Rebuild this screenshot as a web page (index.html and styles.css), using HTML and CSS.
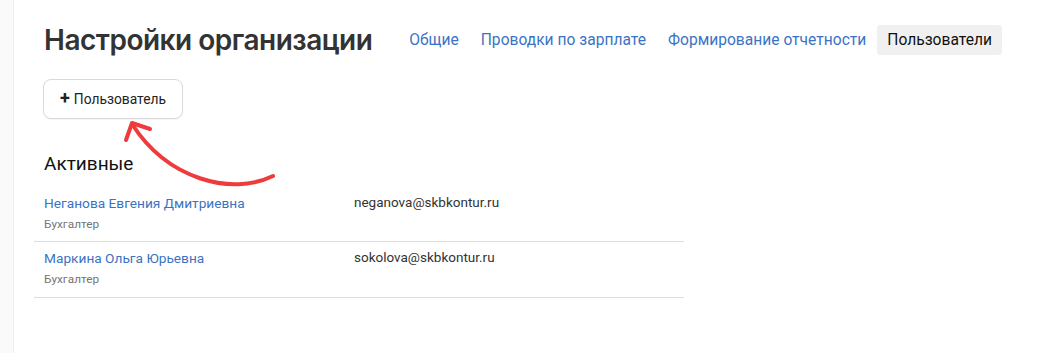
FILE: index.html
```html
<!DOCTYPE html>
<html lang="ru">
<head>
  <meta charset="UTF-8">
  <title>Настройки организации</title>
  <link rel="stylesheet" href="styles.css">
</head>
<body>
  <div class="page">
    <aside class="side"></aside>
    <main class="content">
      <header class="head">
        <h1 class="head-title">Настройки организации</h1>
        <nav class="tabs">
          <a href="#" class="tab">Общие</a>
          <a href="#" class="tab">Проводки по зарплате</a>
          <a href="#" class="tab">Формирование отчетности</a>
          <a href="#" class="tab active">Пользователи</a>
        </nav>
      </header>
      <button class="add-btn"><span class="add-plus">+</span>Пользователь</button>
      <h2 class="section-title">Активные</h2>
      <div class="users">
        <div class="user-row">
          <div class="user-main">
            <a href="#" class="user-name">Неганова Евгения Дмитриевна</a>
            <div class="user-role">Бухгалтер</div>
          </div>
          <div class="user-email">neganova@skbkontur.ru</div>
        </div>
        <div class="user-row">
          <div class="user-main">
            <a href="#" class="user-name">Маркина Ольга Юрьевна</a>
            <div class="user-role">Бухгалтер</div>
          </div>
          <div class="user-email">sokolova@skbkontur.ru</div>
        </div>
      </div>
      <!-- hint arrow pointing at the add button -->
      <svg class="hint-arrow" width="160" height="80" viewBox="120 115 160 80">
        <path d="M273 176 C 232 196, 168 180, 132 124" fill="none" stroke="#ef3b3b" stroke-width="4" stroke-linecap="round"/>
        <path d="M126 140 L 132 123 L 150 129" fill="none" stroke="#ef3b3b" stroke-width="4" stroke-linecap="round" stroke-linejoin="round"/>
      </svg>
    </main>
  </div>
</body>
</html>
```

FILE: styles.css
```css
:root {
  --link: #3b73c4;
  --text: #222;
  --muted: #757575;
  --line: #dcdcdc;
}
html, body {
  margin: 0;
  padding: 0;
  background: #fff;
  color: var(--text);
  font-family: Roboto, 'Liberation Sans', Arial, sans-serif;
}
.page {
  display: flex;
  min-height: 353px;
}
.side {
  width: 13px;
  flex-shrink: 0;
  background: #fafafa;
  border-right: 1px solid #eeeeee;
}
.content {
  position: relative;
  flex: 1;
  padding: 0 0 0 20px;
}
.head {
  display: flex;
  align-items: center;
  padding-top: 24px;
  height: 32px;
}
.head-title {
  margin: 0 0 0 10px;
  font-family: Inter, 'Noto Sans', sans-serif;
  font-size: 28px;
  font-weight: 600;
  color: #333;
  letter-spacing: -0.5px;
  white-space: nowrap;
}
.tabs {
  display: flex;
  align-items: center;
  margin-left: 26px;
}
.tab {
  font-size: 15.6px;
  color: var(--link);
  text-decoration: none;
  padding: 6px 11px;
  border-radius: 3px;
  line-height: 18px;
}
.tab.active {
  background: #f0f0f0;
  color: #111;
  padding: 6px 10px;
}
.add-btn {
  display: flex;
  align-items: center;
  margin: 23px 0 0 9px;
  width: 140px;
  height: 40px;
  padding: 0 0 0 16px;
  background: #fff;
  border: 1px solid #d9d9d9;
  border-radius: 8px;
  font-family: inherit;
  font-size: 13.8px;
  color: #222;
  box-shadow: 0 1px 1px rgba(0,0,0,0.04);
}
.add-plus {
  font-size: 18px;
  font-weight: 700;
  margin-right: 4px;
  line-height: 1;
  position: relative;
  top: -1px;
}
.section-title {
  margin: 33px 0 0 10px;
  font-size: 19px;
  font-weight: 400;
  color: #111;
  line-height: 24px;
}
.users {
  width: 650px;
  margin-top: 11px;
}
.user-row {
  display: flex;
  height: 55px;
  border-bottom: 1px solid var(--line);
  box-sizing: border-box;
  padding: 8px 0 0 10px;
}
.user-row + .user-row {
  height: 56px;
}
.user-main {
  width: 310px;
}
.user-name {
  display: block;
  font-size: 13.7px;
  color: var(--link);
  text-decoration: none;
  line-height: 16px;
}
.user-role {
  margin-top: 6px;
  font-size: 11.8px;
  color: var(--muted);
  line-height: 14px;
}
.user-email {
  font-size: 13.5px;
  color: #333;
  line-height: 16px;
  margin-top: -1px;
}
.hint-arrow {
  position: absolute;
  left: 106px;
  top: 115px;
}
```
